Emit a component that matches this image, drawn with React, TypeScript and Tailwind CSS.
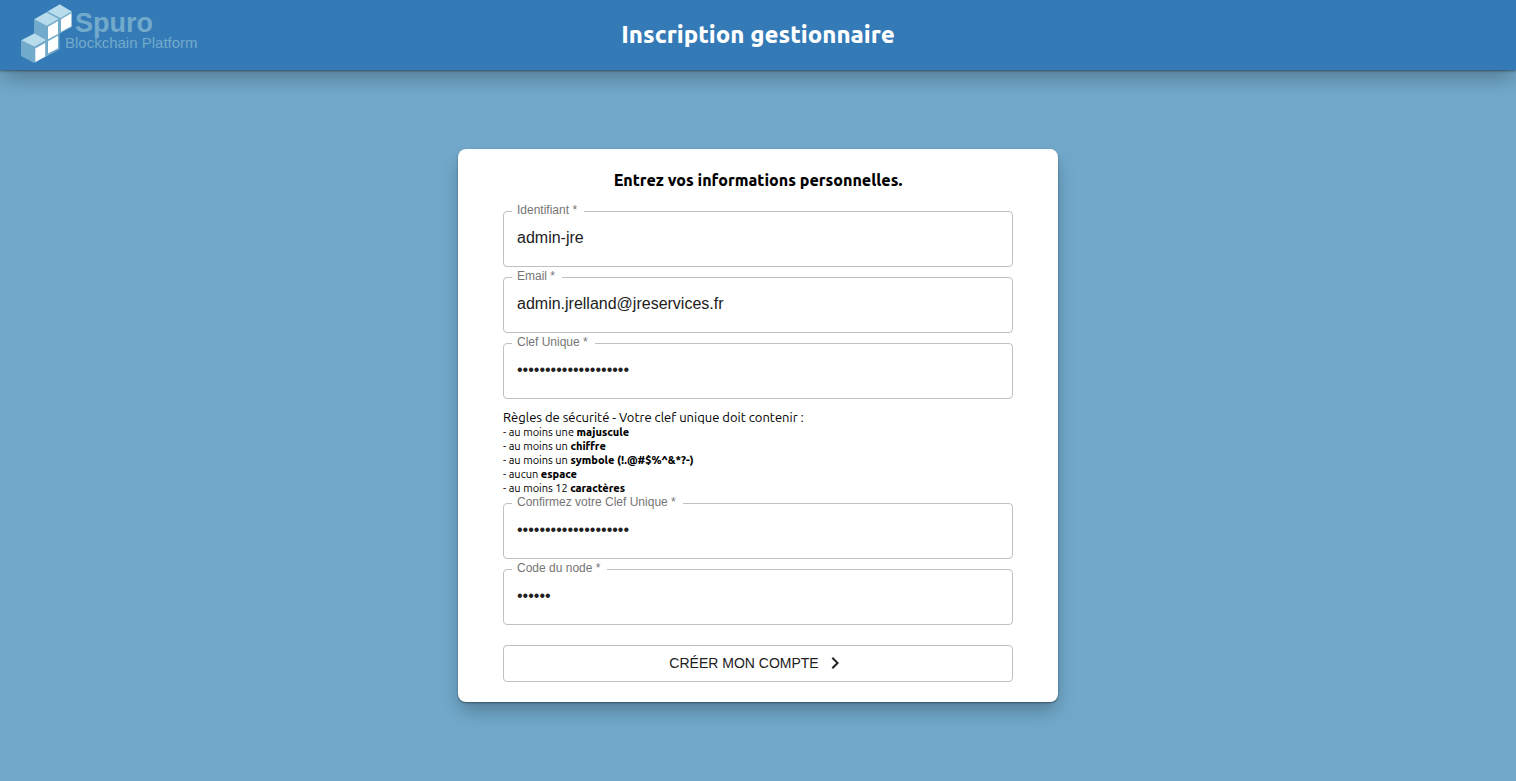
import { useId, useState } from "react";
import { MdNavigateNext } from "react-icons/md";

type FieldProps = {
  label: string;
  type?: string;
  initial: string;
};

function Field({ label, type = "text", initial }: FieldProps) {
  const id = useId();
  const [value, setValue] = useState(initial);
  return (
    <div className="relative">
      <input
        id={id}
        type={type}
        required
        autoComplete="off"
        value={value}
        onChange={(e) => setValue(e.target.value)}
        className="block h-14 w-full rounded border border-[#c0c0c0] bg-white px-[13px] pb-0.5 text-base text-[#212121] outline-none focus:border-[#347ab7]"
      />
      <label
        htmlFor={id}
        className="absolute -top-2 left-[9px] bg-white pr-[7px] pl-[5px] text-xs leading-[14px] text-[#757575]"
      >
        {label} *
      </label>
    </div>
  );
}

function Logo() {
  return (
    <svg
      viewBox="0 0 204 70"
      role="img"
      aria-label="Spuro Blockchain Platform"
      className="h-[70px] w-[204px]"
    >
      <path
        d="M21 40.2 34 33.4V19.2L59.7 4.2 72 11.4V27L59.5 33.8V49.5L34.3 63 21 56Z"
        fill="#72aacb"
      />
      <g fill="#b9dcec">
        <path d="M21.6 40.2 34.5 33.6 46 40 34.5 46.6Z" />
        <path d="M34.6 19.3 46.5 12.4 58.6 19 46.7 25.8Z" />
        <path d="M47.8 11.5 59.7 4.6 71.6 11.6 60.5 17.9Z" />
      </g>
      <g fill="#fff">
        <path d="M35.3 48.5 45.2 43V56.4L35.3 62Z" />
        <path d="M48 41.3 58 35.8V48.3L48 53.6Z" />
        <path d="M48 26.8 58 21V33.9L48 39.3Z" />
        <path d="M61 19.2 71.3 13.2V26.2L61 31.8Z" />
      </g>
      <g fill="#72aacb" fontFamily="'Liberation Sans', Arial, sans-serif">
        <text x="75" y="32" fontSize="27" fontWeight="700">
          Spuro
        </text>
        <text x="65" y="48" fontSize="15">
          Blockchain Platform
        </text>
      </g>
    </svg>
  );
}

const rules = [
  { lead: "- au moins une ", strong: "majuscule" },
  { lead: "- au moins un ", strong: "chiffre" },
  { lead: "- au moins un ", strong: "symbole (!.@#$%^&*?-)" },
  { lead: "- aucun ", strong: "espace" },
  { lead: "- au moins 12 ", strong: "caractères" },
];

export default function App() {
  return (
    <div className="flex min-h-screen flex-col bg-[#72a9cb] font-['Liberation_Sans',Arial,sans-serif]">
      <header className="grid h-[70px] grid-cols-[1fr_auto_1fr] items-center bg-[#347ab7] shadow-[0_1px_2px_rgba(0,0,0,0.4),0_10px_20px_-2px_rgba(0,0,0,0.28)]">
        <Logo />
        <h1 className="font-['Ubuntu','Noto_Sans',sans-serif] text-2xl font-extrabold text-white">
          Inscription gestionnaire
        </h1>
      </header>

      <main className="flex flex-1 items-center justify-center py-10">
        <form
          onSubmit={(e) => e.preventDefault()}
          className="flex w-full max-w-[600px] flex-col gap-2.5 rounded-lg bg-white px-[45px] py-5 shadow-[0_1px_2px_rgba(0,0,0,0.4),0_10px_20px_-2px_rgba(0,0,0,0.28)]"
        >
          <h2 className="mb-2.5 text-center font-['Ubuntu','Noto_Sans',sans-serif] text-base leading-[22px] font-extrabold text-black">
            Entrez vos informations personnelles.
          </h2>
          <Field label="Identifiant" initial="admin-jre" />
          <Field label="Email" initial="admin.jrelland@jreservices.fr" />
          <Field label="Clef Unique" type="password" initial="Abcdefgh.1234567890!" />
          <div className="-mb-0.5 font-['Ubuntu','Noto_Sans',sans-serif] text-[11px] leading-[14px] font-[440] text-black">
            <p className="text-[13px] leading-4">
              Règles de sécurité - Votre clef unique doit contenir :
            </p>
            <ul>
              {rules.map((rule) => (
                <li key={rule.strong}>
                  {rule.lead}
                  <strong className="font-extrabold">{rule.strong}</strong>
                </li>
              ))}
            </ul>
          </div>
          <Field
            label="Confirmez votre Clef Unique"
            type="password"
            initial="Abcdefgh.1234567890!"
          />
          <Field label="Code du node" type="password" initial="123456" />
          <button
            type="submit"
            className="mt-2.5 flex h-[37px] w-full cursor-pointer items-center justify-center gap-1 rounded border border-[#c0c0c0] pb-0.5 text-sm text-[#212121] uppercase"
          >
            Créer mon compte
            <MdNavigateNext size={24} aria-hidden="true" />
          </button>
        </form>
      </main>
    </div>
  );
}
